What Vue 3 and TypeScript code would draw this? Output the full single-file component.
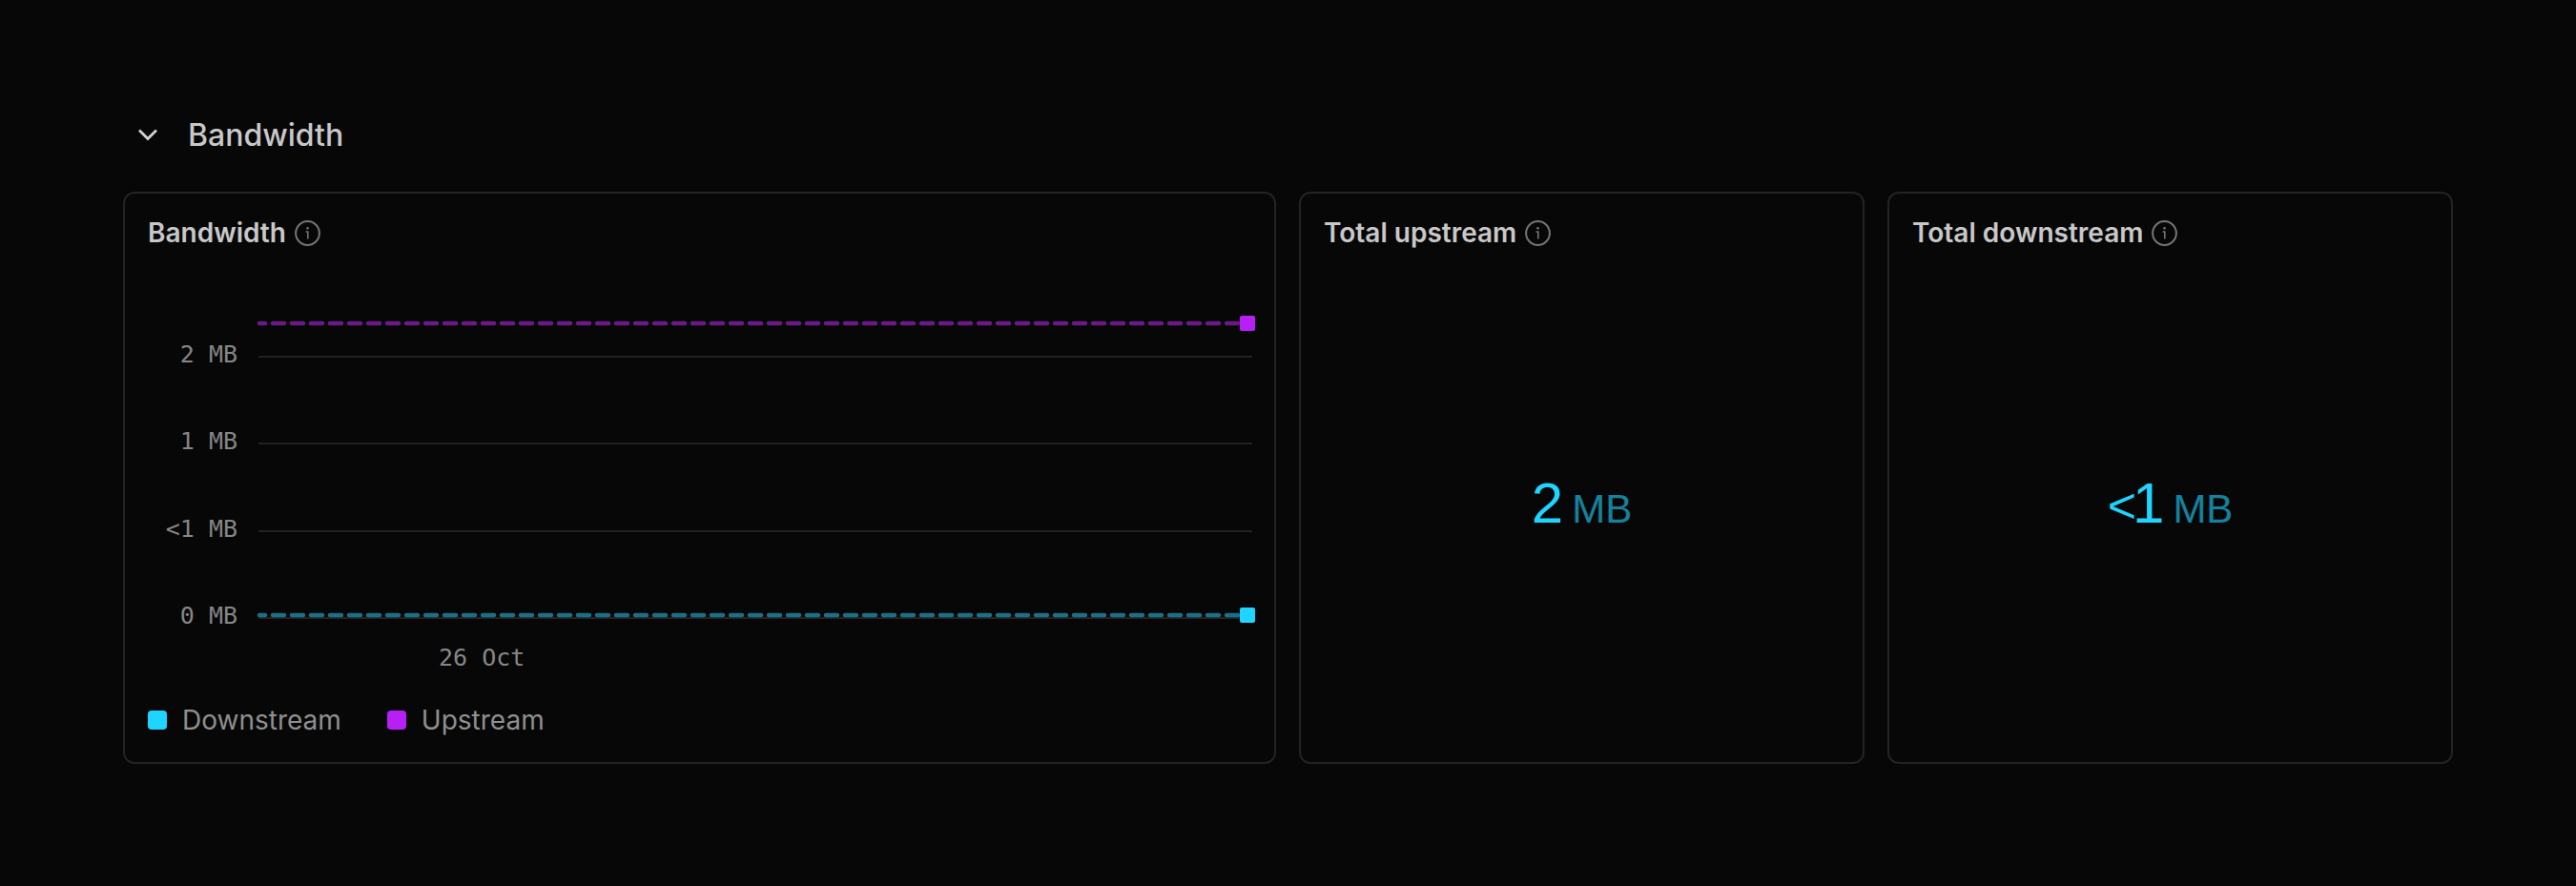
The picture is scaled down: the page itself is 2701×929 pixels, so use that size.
<script setup lang="ts">
interface Tick { label: string; y: number }
interface Stat { title: string; prefix: string; value: string; unit: string }

const chartLeft = 155
const chartTop = 300
const toLocal = (y: number): number => y - chartTop

const ticks: Tick[] = [
  { label: '2 MB', y: 374 },
  { label: '1 MB', y: 465 },
  { label: '<1 MB', y: 557 },
  { label: '0 MB', y: 648 },
].map((t) => ({ label: t.label, y: toLocal(t.y) }))

const x0 = 271 - chartLeft
const x1 = 1313 - chartLeft
const dashX0 = 272 - chartLeft
const upY = toLocal(339)
const downY = toLocal(645)

const stats: Stat[] = [
  { title: 'Total upstream', prefix: '', value: '2', unit: 'MB' },
  { title: 'Total downstream', prefix: '<', value: '1', unit: 'MB' },
]
</script>

<template>
  <main class="page">
    <header class="section-head">
      <svg class="chevron" width="22" height="14" viewBox="0 0 22 14" fill="none">
        <path d="M2 2.5 11 11.5l9-9" stroke="#d2d2d2" stroke-width="2.8" />
      </svg>
      <h2 class="section-title">Bandwidth</h2>
    </header>

    <div class="grid">
      <section class="card chart-card">
        <div class="card-head">
          <span class="card-title">Bandwidth</span>
          <svg class="info" width="27" height="27" viewBox="0 0 27 27" fill="none">
            <circle cx="13.5" cy="13.5" r="12.4" stroke="#757575" stroke-width="2" />
            <path d="M11.6 12h2.2v7.4" stroke="#757575" stroke-width="1.6" />
            <circle cx="13.5" cy="8.2" r="1.3" fill="#757575" />
          </svg>
        </div>

        <svg class="chart" width="1158" height="420" viewBox="0 0 1158 420">
          <g v-for="t in ticks" :key="t.label">
            <line :x1="x0" :x2="x1" :y1="t.y" :y2="t.y" class="grid-line" />
            <text :x="94" :y="t.y + 6" class="axis" text-anchor="end">{{ t.label }}</text>
          </g>
          <text x="305" y="398" class="axis">26 Oct</text>

          <line :x1="dashX0" :x2="x1" :y1="upY" :y2="upY" class="dash dash-up" />
          <line :x1="dashX0" :x2="x1" :y1="downY" :y2="downY" class="dash dash-down" />
          <rect x="1145" :y="upY - 8" width="16" height="16" rx="2" fill="#b71ff5" />
          <rect x="1145" :y="downY - 8" width="16" height="16" rx="2" fill="#1fd4ff" />
        </svg>

        <div class="legend">
          <span class="legend-item"><i class="swatch swatch-down"></i>Downstream</span>
          <span class="legend-item"><i class="swatch swatch-up"></i>Upstream</span>
        </div>
      </section>

      <section v-for="s in stats" :key="s.title" class="card stat-card">
        <div class="card-head">
          <span class="card-title">{{ s.title }}</span>
          <svg class="info" width="27" height="27" viewBox="0 0 27 27" fill="none">
            <circle cx="13.5" cy="13.5" r="12.4" stroke="#757575" stroke-width="2" />
            <path d="M11.6 12h2.2v7.4" stroke="#757575" stroke-width="1.6" />
            <circle cx="13.5" cy="8.2" r="1.3" fill="#757575" />
          </svg>
        </div>
        <div class="stat-body">
          <span class="value"><span v-if="s.prefix" class="prefix">{{ s.prefix }}</span>{{ s.value }}</span>
          <span class="unit">{{ s.unit }}</span>
        </div>
      </section>
    </div>
  </main>
</template>

<style>
html,
body {
  background: #070708;
}
</style>

<style scoped>
.page {
  box-sizing: border-box;
  width: 2701px;
  height: 929px;
  padding: 117px 129px 0;
  background: #070708;
  font-family: Inter, "Liberation Sans", sans-serif;
}
.section-head {
  display: flex;
  align-items: center;
  height: 48px;
  padding-left: 15px;
  gap: 31px;
}
.section-title {
  margin: 0;
  font-size: 32px;
  font-weight: 500;
  color: #c8c8c8;
}
.grid {
  display: grid;
  grid-template-columns: 1209px 1fr 1fr;
  gap: 24px;
  margin-top: 36px;
  height: 600px;
}
.card {
  box-sizing: border-box;
  border: 2px solid #232323;
  border-radius: 12px;
  padding: 24px 24px 0;
  display: flex;
  flex-direction: column;
  min-width: 0;
}
.card-head {
  display: flex;
  align-items: center;
  gap: 9px;
  height: 34px;
}
.card-title {
  font-size: 28px;
  font-weight: 600;
  color: #c8c8c8;
}
.chart {
  margin-top: 39px;
  overflow: visible;
  flex: none;
}
.grid-line {
  stroke: #222;
  stroke-width: 2;
}
.axis {
  font-family: "DejaVu Sans Mono", "Liberation Mono", monospace;
  font-size: 25px;
  fill: #868686;
}
.dash {
  stroke-width: 4.5;
  stroke-linecap: round;
  stroke-dasharray: 12 8;
  stroke-dashoffset: 6;
}
.dash-up {
  stroke: #6b1a85;
}
.dash-down {
  stroke: #1b6f87;
}
.legend {
  display: flex;
  gap: 48px;
  margin-top: 18px;
}
.legend-item {
  display: flex;
  align-items: center;
  gap: 16px;
  font-size: 28px;
  color: #8f8f8f;
}
.swatch {
  width: 20px;
  height: 20px;
  border-radius: 4px;
}
.swatch-down {
  background: #1fd4ff;
}
.swatch-up {
  background: #b71ff5;
}
.stat-body {
  flex: 1;
  display: flex;
  align-items: baseline;
  justify-content: center;
  gap: 9px;
  padding-top: 232px;
  font-family: "Liberation Sans", Arial, sans-serif;
}
.value {
  font-size: 60px;
  line-height: 70px;
  color: #1fd4ff;
}
.prefix {
  font-size: 52px;
  letter-spacing: -4px;
}
.unit {
  font-size: 42px;
  color: #1fd4ff;
  opacity: 0.6;
}
</style>
